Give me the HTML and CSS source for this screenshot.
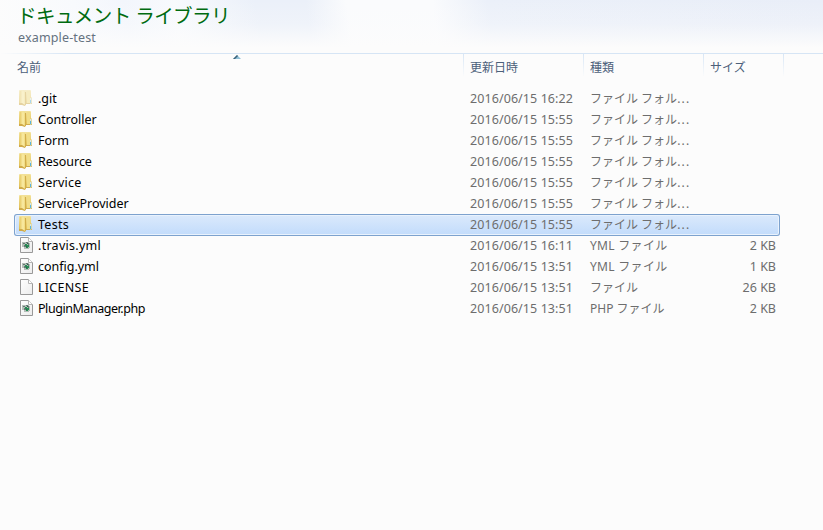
FILE: index.html
```
<!DOCTYPE html>
<html lang="ja">
<head>
<meta charset="utf-8">
<title>example-test</title>
<link rel="stylesheet" href="styles.css">
</head>
<body>
<svg class="defs" width="0" height="0" aria-hidden="true">
  <defs>
    <linearGradient id="gold" x2="0" y2="1"><stop offset="0" stop-color="#f3e29a"/><stop offset="1" stop-color="#e0bd50"/></linearGradient>
    <linearGradient id="flap"><stop offset="0" stop-color="#e8cd6c"/><stop offset=".6" stop-color="#faeca6"/><stop offset="1" stop-color="#efd97f"/></linearGradient>
    <linearGradient id="paper" x2="1" y2="1"><stop offset="0" stop-color="#fff"/><stop offset="1" stop-color="#ececec"/></linearGradient>
    <symbol id="folder" viewBox="0 0 16 18">
      <path d="M1 1Q1 0 2 0H12Q13 0 13 1V7L14 8V14H1Z" fill="url(#gold)"/>
      <path d="M2 1L7 1.500V15.500L2 14Z" fill="url(#flap)"/>
      <path d="M1 13H4L7 15V16L4 15H1Z" fill="#d0aa48"/>
      <path d="M7 2H8V15L7 15.500Z" fill="#d2ae4b"/>
      <path d="M9 1H12V8H13V14H9Z" fill="#f1dd88"/>
      <path d="M8 13H14V14H8Z" fill="#cfad50"/>
      <path d="M12 8H13.500V13.500H12Z" fill="#d7e6e3"/>
      <path d="M12 10H13V13H12Z" fill="#58b4df"/>
    </symbol>
    <symbol id="file" viewBox="0 0 16 18">
      <path d="M2.500 .5H10.500L14.500 4.500V15.500H2.500Z" fill="url(#paper)" stroke="#999"/>
      <path d="M10.500 .5V4.500H14.500" fill="#fff" stroke="#b5b5b5"/>
    </symbol>
    <symbol id="script" viewBox="0 0 16 18">
      <use href="#file"/>
      <path d="M4 5H11V6H12V11H11V12H6V10H4Z" fill="#b4beb8"/>
      <path d="M5 6H7V7H5ZM8 5H10V6H8ZM6 8H8V10H6ZM10 6H11V8H10Z" fill="#647a72"/>
      <path d="M7 7H9V9H7ZM9 8H11V10H9ZM8 10H10V11H8Z" fill="#238b52"/>
      <path d="M9 6H10V7H9ZM8 9H9V10H8Z" fill="#315e4c"/>
    </symbol>
  </defs>
</svg>
<header class="library">
  <h1 class="title">ドキュメント ライブラリ</h1>
  <p class="subtitle">example-test</p>
</header>
<main class="list">
  <div class="columns">
    <div class="col">名前<svg class="sort" width="8" height="4" viewBox="0 0 8 4"><path d="M0 4L4 0L8 4Z" fill="#8fbfd6"/><path d="M0 4L4 0L5 1L2 4Z" fill="#3b6178"/></svg></div>
    <div class="col">更新日時</div><div class="col">種類</div><div class="col">サイズ</div>
  </div>
  <div class="rows">
    <div class="row hidden-item"><svg class="icon"><use href="#folder"/></svg><span class="name">.git</span><span class="date">2016/06/15 16:22</span><span class="type">ファイル フォル<span class="dots">...</span></span><span class="size"></span></div>
    <div class="row"><svg class="icon"><use href="#folder"/></svg><span class="name">Controller</span><span class="date">2016/06/15 15:55</span><span class="type">ファイル フォル<span class="dots">...</span></span><span class="size"></span></div>
    <div class="row"><svg class="icon"><use href="#folder"/></svg><span class="name">Form</span><span class="date">2016/06/15 15:55</span><span class="type">ファイル フォル<span class="dots">...</span></span><span class="size"></span></div>
    <div class="row"><svg class="icon"><use href="#folder"/></svg><span class="name">Resource</span><span class="date">2016/06/15 15:55</span><span class="type">ファイル フォル<span class="dots">...</span></span><span class="size"></span></div>
    <div class="row"><svg class="icon"><use href="#folder"/></svg><span class="name loose">Service</span><span class="date">2016/06/15 15:55</span><span class="type">ファイル フォル<span class="dots">...</span></span><span class="size"></span></div>
    <div class="row"><svg class="icon"><use href="#folder"/></svg><span class="name">ServiceProvider</span><span class="date">2016/06/15 15:55</span><span class="type">ファイル フォル<span class="dots">...</span></span><span class="size"></span></div>
    <div class="row selected"><svg class="icon"><use href="#folder"/></svg><span class="name loose">Tests</span><span class="date">2016/06/15 15:55</span><span class="type">ファイル フォル<span class="dots">...</span></span><span class="size"></span></div>
    <div class="row"><svg class="icon"><use href="#script"/></svg><span class="name loose">.travis.yml</span><span class="date">2016/06/15 16:11</span><span class="type mixed">YML ファイル</span><span class="size">2 KB</span></div>
    <div class="row"><svg class="icon"><use href="#script"/></svg><span class="name">config.yml</span><span class="date">2016/06/15 13:51</span><span class="type mixed">YML ファイル</span><span class="size">1 KB</span></div>
    <div class="row"><svg class="icon"><use href="#file"/></svg><span class="name loose">LICENSE</span><span class="date">2016/06/15 13:51</span><span class="type">ファイル</span><span class="size">26 KB</span></div>
    <div class="row"><svg class="icon"><use href="#script"/></svg><span class="name tight">PluginManager.php</span><span class="date">2016/06/15 13:51</span><span class="type">PHP ファイル</span><span class="size">2 KB</span></div>
  </div>
</main>
</body>
</html>
```
FILE: styles.css
```
* { box-sizing: border-box; }
body {
  margin: 0;
  height: 530px;
  overflow: hidden;
  background: #fcfcfc;
  color: #000;
  font: 12.5px/21px "Noto Sans", "Noto Sans CJK JP", sans-serif;
}
.defs { position: absolute; }
.library {
  height: 53px;
  padding: 3px 0 0 18px;
  background:
    linear-gradient(180deg, rgba(252,252,252,0) 0%, rgba(252,252,252,.25) 45%, #fcfcfc 90%),
    linear-gradient(82deg, #fcfcfc 0, #f8fafd 80px, #f3f6fc 130px, #f8fafd 180px, #ebf0f9 260px, #ebf0f9 310px, #fafbfd 350px, #fafbfd 435px, #ebf0f9 490px, #e9eef8 100%);
}
.title {
  margin: 0 0 0 -1px;
  color: #006b10;
  font-size: 19.500px;
  font-weight: 400;
  line-height: 25px;
  letter-spacing: -.55px;
}
.subtitle {
  margin: 0;
  color: #65727f;
  line-height: 19px;
  letter-spacing: .15px;
}
.columns {
  display: grid;
  grid-template-columns: 464px 120px 120px 80px;
  height: 26px;
  background: linear-gradient(90deg, #fcfcfc 0, #d6e5f5 70px) 0 0 / 100% 1px no-repeat;
  color: #4c607a;
  font-size: 12px;
  line-height: 29px;
}
.col {
  position: relative;
  padding-left: 6px;
  background: linear-gradient(#d6e5f5, #fcfcfc) 100% 0 / 1px 24px no-repeat;
}
.col:first-child { padding-left: 17px; }
.sort { position: absolute; left: 233px; top: 2px; }
.rows { margin: 9px 0 0 14px; width: 766px; }
.row {
  display: grid;
  grid-template-columns: 24px 432px 120px 110px 76px;
  height: 21px;
  color: #6d6d6d;
  white-space: nowrap;
}
.icon { width: 16px; height: 18px; margin: 2px 0 0 4px; }
.name { color: #000; letter-spacing: -.02px; }
.loose { letter-spacing: .28px; }
.tight { letter-spacing: -.45px; }
.date { letter-spacing: .08px; }
.type { font-size: 12px; }
.mixed { letter-spacing: .3px; }
.dots { letter-spacing: 1.2px; }
.size { text-align: right; }
.hidden-item .icon { opacity: .5; }
.selected {
  height: 22px;
  margin-bottom: -1px;
  border-radius: 3px;
  background: linear-gradient(#dceafc, #c1dbfb);
  box-shadow: inset 0 0 0 1px #7da2ce, inset 0 0 0 2px #e9f2fd;
}
```
